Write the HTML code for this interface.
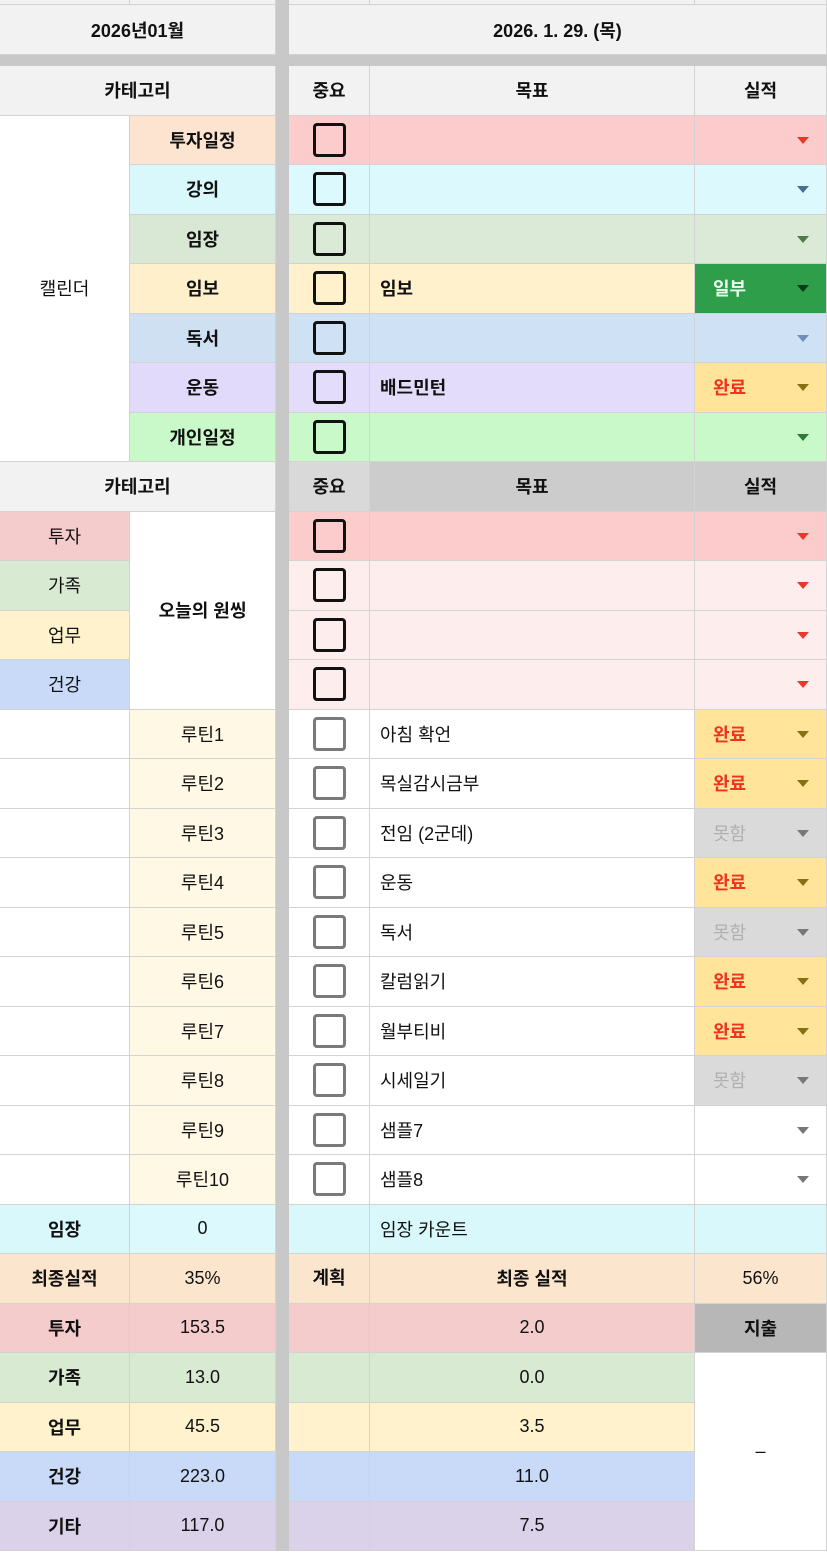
<!DOCTYPE html>
<html><head><meta charset="utf-8">
<style>
*{box-sizing:border-box;margin:0;padding:0}
body{width:827px;height:1555px;background:#fff;font-family:"Liberation Sans","Noto Sans CJK KR",sans-serif;overflow:hidden}
.g{display:grid;grid-template-columns:130px 146px 13px 81px 325px 132px;grid-template-rows:5px 50px 11px repeat(30,49.5px);width:827px}
.g>div{display:flex;align-items:center;justify-content:center;border-right:1px solid #d3d3d3;border-bottom:1px solid #d3d3d3;font-size:18px;color:#111;position:relative}
.b{font-weight:bold}
.l{justify-content:flex-start!important;padding-left:10px}
.e{justify-content:flex-start!important;padding-left:18px;font-weight:bold}
.gap{background:#c8c8c8;border:none!important}
.cb{width:33px;height:34px;border:3px solid #111;border-radius:4px;display:inline-block}
.cg{width:33px;height:34px;border:3px solid #7a7a7a;border-radius:4px;display:inline-block}
.dd{position:absolute;right:17px;top:21px;width:0;height:0;border-left:6px solid transparent;border-right:6px solid transparent;border-top:7px solid #e53a2a}
.g>div.red{color:#ee3320}
.g>div.mh{color:#b0b0b0}
.g>div.wh{color:#eafff0}
</style></head><body>
<div class="g">
<div style="grid-area:1/1/2/2;background:#f2f2f2"></div>
<div style="grid-area:1/2/2/3;background:#f2f2f2"></div>
<div class="gap" style="grid-area:1/3/34/4"></div>
<div style="grid-area:1/4/2/5;background:#f2f2f2"></div>
<div style="grid-area:1/5/2/6;background:#f2f2f2"></div>
<div style="grid-area:1/6/2/7;background:#f2f2f2"></div>
<div class="b" style="grid-area:2/1/3/3;background:#f2f2f2">2026년01월</div>
<div class="b" style="grid-area:2/4/3/7;background:#f2f2f2">2026. 1. 29. (목)</div>
<div class="gap" style="grid-area:3/1/4/3"></div>
<div class="gap" style="grid-area:3/4/4/7"></div>
<div class="b" style="grid-area:4/1/5/3;background:#f2f2f2">카테고리</div>
<div class="b" style="grid-area:4/4/5/5;background:#f2f2f2">중요</div>
<div class="b" style="grid-area:4/5/5/6;background:#f2f2f2">목표</div>
<div class="b" style="grid-area:4/6/5/7;background:#f2f2f2">실적</div>
<div style="grid-area:5/1/12/2;background:#fff">캘린더</div>

<div class="b" style="grid-area:5/2/6/3;background:#fde4d0">투자일정</div>
<div style="grid-area:5/4/6/5;background:#fccccc"><span class="cb"></span></div>
<div style="grid-area:5/5/6/6;background:#fccccc"></div>
<div style="grid-area:5/6/6/7;background:#fccccc"><span class="dd"></span></div>

<div class="b" style="grid-area:6/2/7/3;background:#d9f8fc">강의</div>
<div style="grid-area:6/4/7/5;background:#dcfafd"><span class="cb"></span></div>
<div style="grid-area:6/5/7/6;background:#dcfafd"></div>
<div style="grid-area:6/6/7/7;background:#dcfafd"><span class="dd" style="border-top-color:#4a6f8c"></span></div>

<div class="b" style="grid-area:7/2/8/3;background:#d8e8d4">임장</div>
<div style="grid-area:7/4/8/5;background:#dbe9d7"><span class="cb"></span></div>
<div style="grid-area:7/5/8/6;background:#dbe9d7"></div>
<div style="grid-area:7/6/8/7;background:#dbe9d7"><span class="dd" style="border-top-color:#4f7a4a"></span></div>

<div class="b" style="grid-area:8/2/9/3;background:#fff0cc">임보</div>
<div style="grid-area:8/4/9/5;background:#fff1cc"><span class="cb"></span></div>
<div class="l b" style="grid-area:8/5/9/6;background:#fff1cc">임보</div>
<div class="e wh" style="grid-area:8/6/9/7;background:#2f9e4a">일부<span class="dd" style="border-top-color:#0c3a18"></span></div>

<div class="b" style="grid-area:9/2/10/3;background:#cfe0f3">독서</div>
<div style="grid-area:9/4/10/5;background:#cfe1f4"><span class="cb"></span></div>
<div style="grid-area:9/5/10/6;background:#cfe1f4"></div>
<div style="grid-area:9/6/10/7;background:#cfe1f4"><span class="dd" style="border-top-color:#6f8fb8"></span></div>

<div class="b" style="grid-area:10/2/11/3;background:#e2dafa">운동</div>
<div style="grid-area:10/4/11/5;background:#e3dcfb"><span class="cb"></span></div>
<div class="l b" style="grid-area:10/5/11/6;background:#e3dcfb">배드민턴</div>
<div class="e red" style="grid-area:10/6/11/7;background:#ffe49a">완료<span class="dd" style="border-top-color:#8a6e12"></span></div>

<div class="b" style="grid-area:11/2/12/3;background:#c9f8c9">개인일정</div>
<div style="grid-area:11/4/12/5;background:#c9f8c9"><span class="cb"></span></div>
<div style="grid-area:11/5/12/6;background:#c9f8c9"></div>
<div style="grid-area:11/6/12/7;background:#c9f8c9"><span class="dd" style="border-top-color:#2e7a3a"></span></div>

<div class="b" style="grid-area:12/1/13/3;background:#f2f2f2">카테고리</div>
<div class="b" style="grid-area:12/4/13/5;background:#d9d9d9">중요</div>
<div class="b" style="grid-area:12/5/13/6;background:#cccccc">목표</div>
<div class="b" style="grid-area:12/6/13/7;background:#cccccc">실적</div>

<div style="grid-area:13/1/14/2;background:#f4cccc">투자</div>
<div style="grid-area:14/1/15/2;background:#d9ead3">가족</div>
<div style="grid-area:15/1/16/2;background:#fff2cc">업무</div>
<div style="grid-area:16/1/17/2;background:#c9daf8">건강</div>
<div class="b" style="grid-area:13/2/17/3;background:#fff">오늘의 원씽</div>
<div style="grid-area:13/4/14/5;background:#fccccc"><span class="cb"></span></div>
<div style="grid-area:13/5/14/6;background:#fccccc"></div>
<div style="grid-area:13/6/14/7;background:#fccccc"><span class="dd"></span></div>
<div style="grid-area:14/4/15/5;background:#fdeded"><span class="cb"></span></div>
<div style="grid-area:14/5/15/6;background:#fdeded"></div>
<div style="grid-area:14/6/15/7;background:#fdeded"><span class="dd"></span></div>
<div style="grid-area:15/4/16/5;background:#fdeded"><span class="cb"></span></div>
<div style="grid-area:15/5/16/6;background:#fdeded"></div>
<div style="grid-area:15/6/16/7;background:#fdeded"><span class="dd"></span></div>
<div style="grid-area:16/4/17/5;background:#fdeded"><span class="cb"></span></div>
<div style="grid-area:16/5/17/6;background:#fdeded"></div>
<div style="grid-area:16/6/17/7;background:#fdeded"><span class="dd"></span></div>

<div style="grid-area:17/1/18/2"></div><div style="grid-area:17/2/18/3;background:#fff8e5">루틴1</div><div style="grid-area:17/4/18/5"><span class="cg"></span></div><div class="l" style="grid-area:17/5/18/6">아침 확언</div><div class="e red" style="grid-area:17/6/18/7;background:#ffe49a">완료<span class="dd" style="border-top-color:#8a6e12"></span></div>
<div style="grid-area:18/1/19/2"></div><div style="grid-area:18/2/19/3;background:#fff8e5">루틴2</div><div style="grid-area:18/4/19/5"><span class="cg"></span></div><div class="l" style="grid-area:18/5/19/6">목실감시금부</div><div class="e red" style="grid-area:18/6/19/7;background:#ffe49a">완료<span class="dd" style="border-top-color:#8a6e12"></span></div>
<div style="grid-area:19/1/20/2"></div><div style="grid-area:19/2/20/3;background:#fff8e5">루틴3</div><div style="grid-area:19/4/20/5"><span class="cg"></span></div><div class="l" style="grid-area:19/5/20/6">전임 (2군데)</div><div class="e mh" style="grid-area:19/6/20/7;background:#dadada;font-weight:normal">못함<span class="dd" style="border-top-color:#777"></span></div>
<div style="grid-area:20/1/21/2"></div><div style="grid-area:20/2/21/3;background:#fff8e5">루틴4</div><div style="grid-area:20/4/21/5"><span class="cg"></span></div><div class="l" style="grid-area:20/5/21/6">운동</div><div class="e red" style="grid-area:20/6/21/7;background:#ffe49a">완료<span class="dd" style="border-top-color:#8a6e12"></span></div>
<div style="grid-area:21/1/22/2"></div><div style="grid-area:21/2/22/3;background:#fff8e5">루틴5</div><div style="grid-area:21/4/22/5"><span class="cg"></span></div><div class="l" style="grid-area:21/5/22/6">독서</div><div class="e mh" style="grid-area:21/6/22/7;background:#dadada;font-weight:normal">못함<span class="dd" style="border-top-color:#777"></span></div>
<div style="grid-area:22/1/23/2"></div><div style="grid-area:22/2/23/3;background:#fff8e5">루틴6</div><div style="grid-area:22/4/23/5"><span class="cg"></span></div><div class="l" style="grid-area:22/5/23/6">칼럼읽기</div><div class="e red" style="grid-area:22/6/23/7;background:#ffe49a">완료<span class="dd" style="border-top-color:#8a6e12"></span></div>
<div style="grid-area:23/1/24/2"></div><div style="grid-area:23/2/24/3;background:#fff8e5">루틴7</div><div style="grid-area:23/4/24/5"><span class="cg"></span></div><div class="l" style="grid-area:23/5/24/6">월부티비</div><div class="e red" style="grid-area:23/6/24/7;background:#ffe49a">완료<span class="dd" style="border-top-color:#8a6e12"></span></div>
<div style="grid-area:24/1/25/2"></div><div style="grid-area:24/2/25/3;background:#fff8e5">루틴8</div><div style="grid-area:24/4/25/5"><span class="cg"></span></div><div class="l" style="grid-area:24/5/25/6">시세일기</div><div class="e mh" style="grid-area:24/6/25/7;background:#dadada;font-weight:normal">못함<span class="dd" style="border-top-color:#777"></span></div>
<div style="grid-area:25/1/26/2"></div><div style="grid-area:25/2/26/3;background:#fff8e5">루틴9</div><div style="grid-area:25/4/26/5"><span class="cg"></span></div><div class="l" style="grid-area:25/5/26/6">샘플7</div><div style="grid-area:25/6/26/7"><span class="dd" style="border-top-color:#777"></span></div>
<div style="grid-area:26/1/27/2"></div><div style="grid-area:26/2/27/3;background:#fff8e5">루틴10</div><div style="grid-area:26/4/27/5"><span class="cg"></span></div><div class="l" style="grid-area:26/5/27/6">샘플8</div><div style="grid-area:26/6/27/7"><span class="dd" style="border-top-color:#777"></span></div>

<div class="b" style="grid-area:27/1/28/2;background:#d9f8fc">임장</div>
<div style="grid-area:27/2/28/3;background:#dcfafd">0</div>
<div style="grid-area:27/4/28/5;background:#d9f8fc"></div>
<div class="l" style="grid-area:27/5/28/6;background:#d9f8fc">임장 카운트</div>
<div style="grid-area:27/6/28/7;background:#d9f8fc"></div>

<div class="b" style="grid-area:28/1/29/2;background:#fce5cd">최종실적</div>
<div style="grid-area:28/2/29/3;background:#fce5cd">35%</div>
<div class="b" style="grid-area:28/4/29/5;background:#fce5cd;align-items:flex-start;padding-top:10px">계획</div>
<div class="b" style="grid-area:28/5/29/6;background:#fce5cd">최종 실적</div>
<div style="grid-area:28/6/29/7;background:#fce5cd">56%</div>

<div class="b" style="grid-area:29/1/30/2;background:#f4cccc">투자</div><div style="grid-area:29/2/30/3;background:#f4cccc">153.5</div><div style="grid-area:29/4/30/5;background:#f4cccc"></div><div style="grid-area:29/5/30/6;background:#f4cccc">2.0</div>
<div class="b" style="grid-area:29/6/30/7;background:#b7b7b7">지출</div>
<div class="b" style="grid-area:30/1/31/2;background:#d9ead3">가족</div><div style="grid-area:30/2/31/3;background:#d9ead3">13.0</div><div style="grid-area:30/4/31/5;background:#d9ead3"></div><div style="grid-area:30/5/31/6;background:#d9ead3">0.0</div>
<div class="b" style="grid-area:31/1/32/2;background:#fff2cc">업무</div><div style="grid-area:31/2/32/3;background:#fff2cc">45.5</div><div style="grid-area:31/4/32/5;background:#fff2cc"></div><div style="grid-area:31/5/32/6;background:#fff2cc">3.5</div>
<div class="b" style="grid-area:32/1/33/2;background:#c9daf8">건강</div><div style="grid-area:32/2/33/3;background:#c9daf8">223.0</div><div style="grid-area:32/4/33/5;background:#c9daf8"></div><div style="grid-area:32/5/33/6;background:#c9daf8">11.0</div>
<div class="b" style="grid-area:33/1/34/2;background:#d9d2e9">기타</div><div style="grid-area:33/2/34/3;background:#d9d2e9">117.0</div><div style="grid-area:33/4/34/5;background:#d9d2e9"></div><div style="grid-area:33/5/34/6;background:#d9d2e9">7.5</div>
<div style="grid-area:30/6/34/7;background:#fff">–</div>
</div>
</body></html>
